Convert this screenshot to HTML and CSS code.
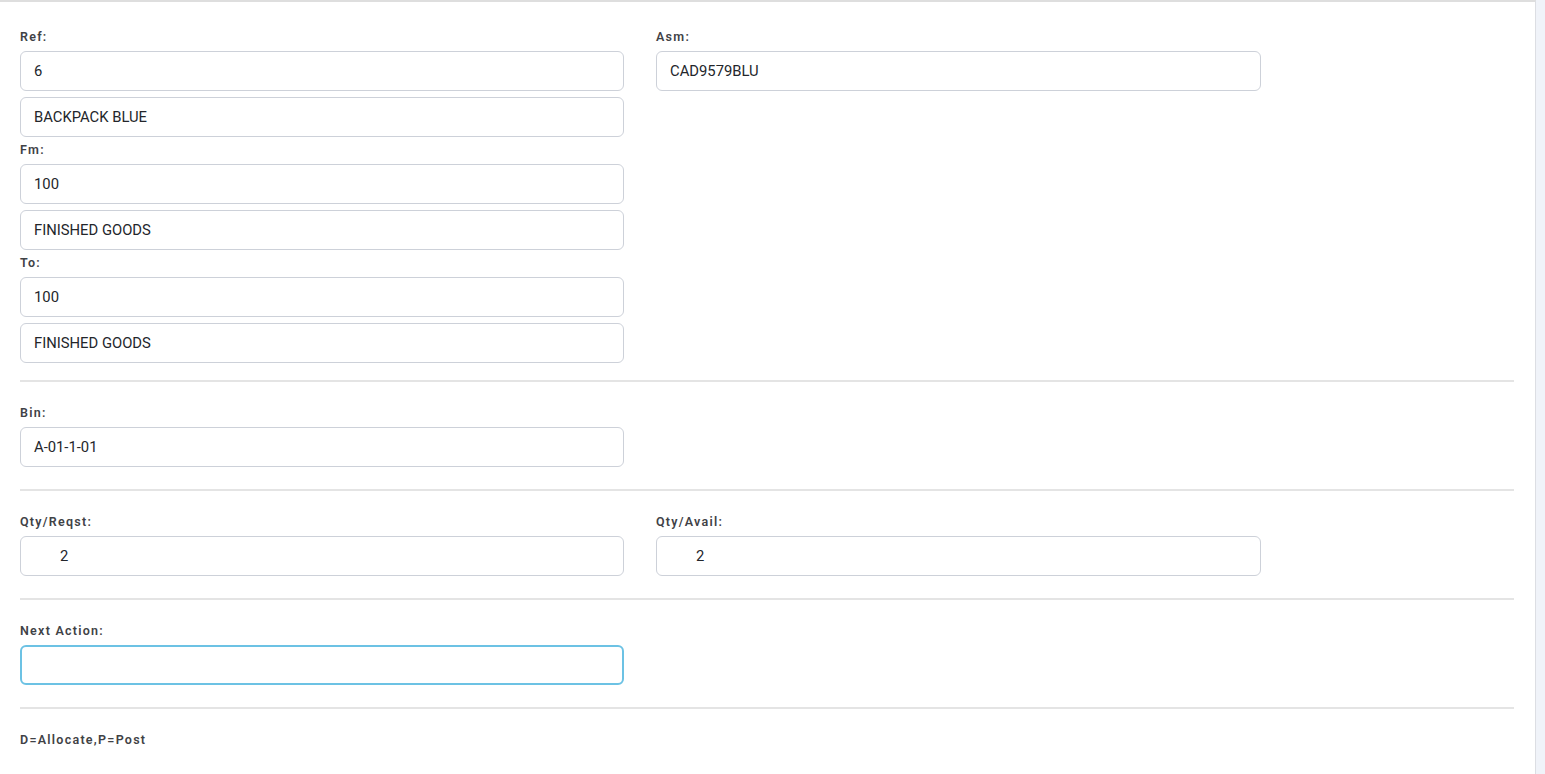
FILE: index.html
```html
<!DOCTYPE html>
<html>
<head>
<meta charset="utf-8">
<link rel="stylesheet" href="styles.css">
</head>
<body>
<div class="panel">
  <section class="sec sec-top">
    <div class="grid">
      <div class="col">
        <label class="lbl">Ref:</label>
        <div class="stack">
          <div class="inp">6</div>
          <div class="inp">BACKPACK BLUE</div>
        </div>
        <label class="lbl">Fm:</label>
        <div class="stack">
          <div class="inp">100</div>
          <div class="inp">FINISHED GOODS</div>
        </div>
        <label class="lbl">To:</label>
        <div class="stack">
          <div class="inp">100</div>
          <div class="inp">FINISHED GOODS</div>
        </div>
      </div>
      <div class="col">
        <label class="lbl">Asm:</label>
        <div class="stack">
          <div class="inp">CAD9579BLU</div>
        </div>
      </div>
    </div>
  </section>
  <hr class="sep">
  <section class="sec">
    <div class="grid">
      <div class="col">
        <label class="lbl">Bin:</label>
        <div class="inp">A-01-1-01</div>
      </div>
    </div>
  </section>
  <hr class="sep">
  <section class="sec">
    <div class="grid">
      <div class="col">
        <label class="lbl">Qty/Reqst:</label>
        <div class="inp num">2</div>
      </div>
      <div class="col">
        <label class="lbl">Qty/Avail:</label>
        <div class="inp num">2</div>
      </div>
    </div>
  </section>
  <hr class="sep">
  <section class="sec">
    <div class="grid">
      <div class="col">
        <label class="lbl">Next Action:</label>
        <div class="inp focus"></div>
      </div>
    </div>
  </section>
  <hr class="sep">
  <section class="sec">
    <div class="lbl hint">D=Allocate,P=Post</div>
  </section>
</div>
</body>
</html>
```
FILE: styles.css
```css
html, body {
  margin: 0;
  padding: 0;
  height: 100%;
}
body {
  background: #f0f3f9;
  font-family: Roboto, "Liberation Sans", Arial, sans-serif;
}
.panel {
  width: 1535px;
  height: 772px;
  background: #ffffff;
  border-top: 2px solid #dedede;
  border-right: 1px solid #dcdee3;
  overflow: hidden;
}
.sec {
  padding: 23px 21px 22px 20px;
}
.sec-top {
  padding-top: 27px;
  padding-bottom: 17.5px;
}
.grid {
  display: grid;
  grid-template-columns: 604px 605px;
  column-gap: 32px;
}
.col {
  display: flex;
  flex-direction: column;
}
.stack {
  display: flex;
  flex-direction: column;
  gap: 5.5px;
  margin-bottom: 5.5px;
}
.stack:last-child {
  margin-bottom: 0;
}
.lbl {
  display: block;
  font-size: 12.5px;
  line-height: 16px;
  font-weight: 600;
  letter-spacing: 1.25px;
  color: #3f4246;
  margin-bottom: 6px;
}
.hint {
  margin-bottom: 0;
}
.inp {
  box-sizing: border-box;
  height: 40px;
  border: 1px solid #cdd1d9;
  border-radius: 6px;
  padding: 0 13px;
  display: flex;
  align-items: center;
  font-size: 14.8px;
  color: #23262b;
  background: #fff;
}
.inp.num {
  padding-left: 39px;
}
.inp.focus {
  border: 2px solid #6cc2e4;
}
.sep {
  margin: 0 21px 0 20px;
  border: 0;
  height: 2px;
  background: #e4e4e4;
}
```
